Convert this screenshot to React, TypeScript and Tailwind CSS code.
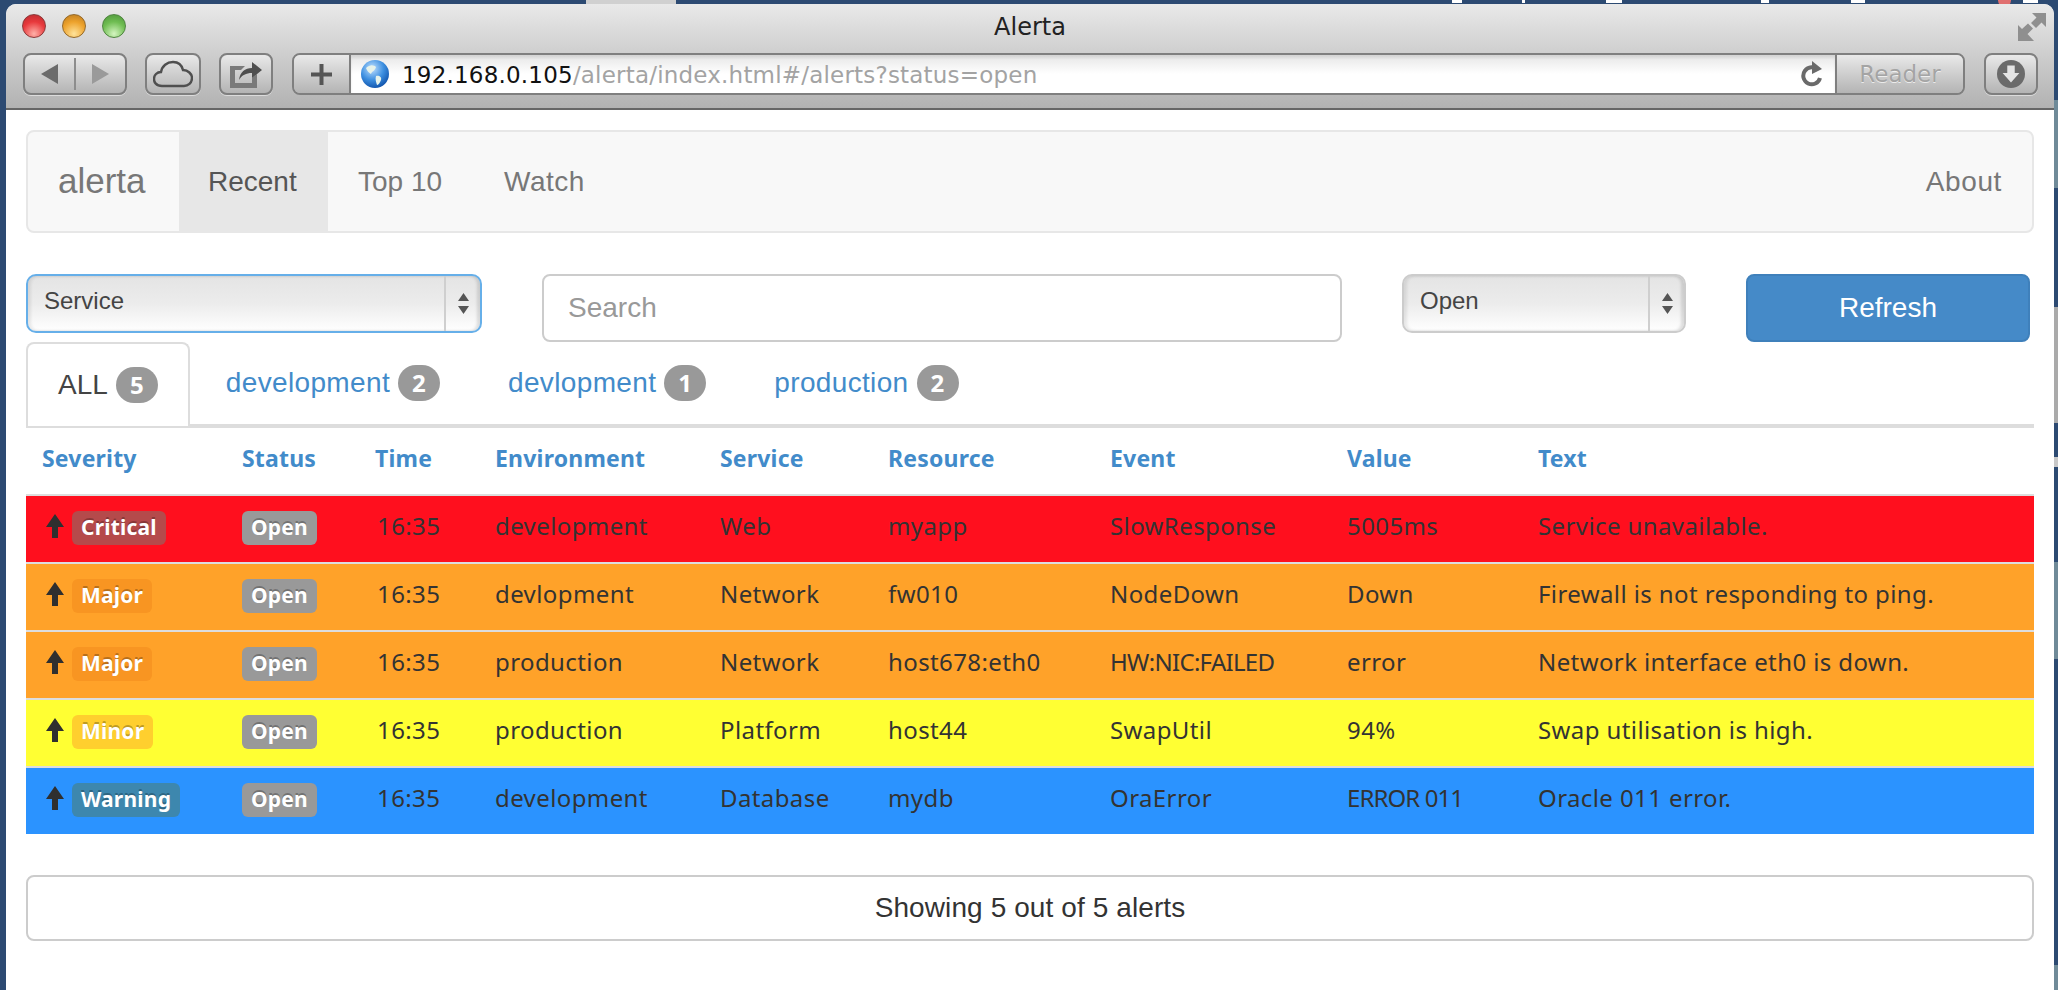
const rows = [
  { sev: "Critical", rowBg: "bg-[#ff0f1e]", pill: "bg-[#b54a4b]", env: "development", service: "Web", resource: "myapp", event: "SlowResponse", value: "5005ms", text: "Service unavailable." },
  { sev: "Major", rowBg: "bg-[#ffa229]", pill: "bg-[#f89522]", env: "devlopment", service: "Network", resource: "fw010", event: "NodeDown", value: "Down", text: "Firewall is not responding to ping." },
  { sev: "Major", rowBg: "bg-[#ffa229]", pill: "bg-[#f89522]", env: "production", service: "Network", resource: "host678:eth0", event: "HW:NIC:FAILED", eventClass: "tracking-[-0.7px]", value: "error", text: "Network interface eth0 is down." },
  { sev: "Minor", rowBg: "bg-[#ffff33]", pill: "bg-[#ffcf2e]", env: "production", service: "Platform", resource: "host44", event: "SwapUtil", value: "94%", text: "Swap utilisation is high." },
  { sev: "Warning", rowBg: "bg-[#2b93ff]", pill: "bg-[#3d87ae]", env: "development", service: "Database", resource: "mydb", event: "OraError", value: "ERROR 011", valueClass: "tracking-[-0.9px]", text: "Oracle 011 error." },
];

const headers = [
  { label: "Severity", width: "w-[200px]" },
  { label: "Status", width: "w-[133px]" },
  { label: "Time", width: "w-[120px]" },
  { label: "Environment", width: "w-[225px]" },
  { label: "Service", width: "w-[168px]" },
  { label: "Resource", width: "w-[222px]" },
  { label: "Event", width: "w-[237px]" },
  { label: "Value", width: "w-[191px]" },
  { label: "Text", width: "w-[512px]" },
];

const tabs = [
  { label: "development", count: 2 },
  { label: "devlopment", count: 1 },
  { label: "production", count: 2 },
];

function ArrowUp() {
  return (
    <svg width="18" height="24" viewBox="0 0 18 24" className="mb-[5px] shrink-0">
      <path d="M9 0 L18 13 L12 13 L12 24 L6 24 L6 13 L0 13 Z" fill="#2f2f2f" />
    </svg>
  );
}

function Pill({ bg, children }: { bg: string; children: React.ReactNode }) {
  return (
    <span className={`inline-flex h-[34px] items-center rounded-[6px] px-[9px] text-[21px] font-bold tracking-[0.2px] text-white [text-shadow:0_-2px_0_rgba(0,0,0,0.25)] ${bg}`}>
      {children}
    </span>
  );
}

function Stepper() {
  return (
    <svg width="11" height="21" viewBox="0 0 11 21">
      <path d="M5.5 0 L11 8 L0 8 Z M0 13 L11 13 L5.5 21 Z" fill="#555" />
    </svg>
  );
}

function SelectBox({ label, width, border }: { label: string; width: string; border: string }) {
  return (
    <div className={`flex h-[59px] items-center overflow-hidden rounded-[10px] border-2 bg-linear-to-b from-[#e4e4e4] via-[#ececec] to-white font-['Liberation_Sans',sans-serif] text-[24px] text-[#444] shadow-[inset_3px_0_3px_rgba(0,0,0,0.08),inset_-3px_0_3px_rgba(0,0,0,0.12)] ${width} ${border}`}>
      <span className="flex-1 pb-[5px] pl-[16px]">{label}</span>
      <span className="flex h-full w-[36px] items-center justify-center border-l-2 border-[#cfcfcf]">
        <Stepper />
      </span>
    </div>
  );
}

function ChromeBtn({ className, children }: { className: string; children: React.ReactNode }) {
  return (
    <div className={`flex h-[42px] items-center justify-center rounded-[8px] border-2 border-[#7f7f7f] bg-linear-to-b from-[#e9e9e9] to-[#b4b4b4] shadow-[0_1px_0_rgba(255,255,255,0.5)] ${className}`}>
      {children}
    </div>
  );
}

export default function App() {
  return (
    <div className="relative h-[990px] w-[2058px] overflow-hidden bg-[#2c4a72] pt-[4px] pl-[6px] pr-[4px]">
      {/* desktop bits peeking above the window */}
      <div className="absolute top-0 left-[586px] h-[5px] w-[90px] bg-[#d0d0d0]" />
      <div className="absolute top-0 left-[1452px] h-[3px] w-[10px] bg-white" />
      <div className="absolute top-0 left-[1522px] h-[3px] w-[3px] bg-white" />
      <div className="absolute top-0 left-[1606px] h-[3px] w-[16px] bg-white" />
      <div className="absolute top-0 left-[1761px] h-[3px] w-[8px] bg-white" />
      <div className="absolute top-0 left-[1851px] h-[3px] w-[14px] bg-white" />
      <div className="absolute top-[-6px] left-[1998px] h-[13px] w-[13px] rounded-full bg-[#e07070]" />
      <div className="absolute top-0 left-[2023px] h-[3px] w-[15px] bg-white" />

      {/* desktop bits to the right of the window */}
      <div className="absolute top-[100px] right-0 h-[88px] w-[4px] bg-[#6f8a98]" />
      <div className="absolute top-[307px] right-0 h-[116px] w-[4px] bg-[#aaaaaa]" />
      <div className="absolute top-[457px] right-0 h-[10px] w-[4px] bg-[#c8c8c8]" />
      <div className="absolute top-[562px] right-0 h-[97px] w-[4px] bg-[#6f8a98]" />
      <div className="absolute top-[965px] right-0 h-[25px] w-[4px] bg-[#6f8a98]" />

      <div className="relative flex h-full flex-col overflow-hidden rounded-t-[10px] bg-white">
        {/* Safari toolbar */}
        <div className="h-[106px] shrink-0 border-b-2 border-[#666] bg-linear-to-b from-[#e9e9e9] to-[#b2b2b2]">
          <div className="grid h-[49px] grid-cols-[1fr_auto_1fr] items-start">
            <div className="flex gap-[16px] pt-[10px] pl-[16px]">
              <span className="h-[24px] w-[24px] rounded-full border border-[#8a3a3a] bg-[radial-gradient(circle_at_50%_85%,#ffb0a8,#e8393c_55%,#b82a2e)]" />
              <span className="h-[24px] w-[24px] rounded-full border border-[#94692a] bg-[radial-gradient(circle_at_50%_85%,#ffe39a,#eda22c_55%,#b9791f)]" />
              <span className="h-[24px] w-[24px] rounded-full border border-[#4f8440] bg-[radial-gradient(circle_at_50%_85%,#d4f5c0,#6fbd52_55%,#4c933a)]" />
            </div>
            <div className="pt-[9px] font-['DejaVu_Sans',sans-serif] text-[24px] leading-[28px] text-[#222]">Alerta</div>
            <div className="flex justify-end pt-[9px] pr-[8px]">
              <svg width="28" height="28" viewBox="0 0 28 28">
                <path d="M28 0 V14 L23.5 9.5 L18 15 L13 10 L18.5 4.5 L14 0 Z M0 28 V12 L4 16 L10 10.5 L15 15.5 L9.5 21 L16 28 Z" fill="#8f8f8f" />
              </svg>
            </div>
          </div>

          <div className="flex items-center pl-[17px]">
            <ChromeBtn className="w-[104px]">
              <div className="flex h-full w-full items-center">
                <span className="flex flex-1 justify-center">
                  <svg width="17" height="20" viewBox="0 0 17 20"><path d="M17 0 L17 20 L0 10 Z" fill="#6b6b6b" /></svg>
                </span>
                <span className="h-[32px] w-[2px] bg-[#8d8d8d]" />
                <span className="flex flex-1 justify-center">
                  <svg width="17" height="20" viewBox="0 0 17 20"><path d="M0 0 L0 20 L17 10 Z" fill="#9a9a9a" /></svg>
                </span>
              </div>
            </ChromeBtn>
            <ChromeBtn className="ml-[18px] w-[56px]">
              <svg width="40" height="28" viewBox="0 0 40 28">
                <path d="M9 26 C3 26 1 22 1 19 C1 15 4 12 8 12 C9 6 14 2 20 2 C26 2 29 6 30 10 C35 10 39 14 39 18 C39 23 35 26 31 26 Z" fill="none" stroke="#4f4f4f" strokeWidth="2.4" />
              </svg>
            </ChromeBtn>
            <ChromeBtn className="ml-[18px] w-[54px]">
              <svg width="32" height="30" viewBox="0 0 32 30">
                <path d="M0 7 H15 L11 11 H5 V24 H22 V19 L27 15 V29 H0 Z" fill="#7a7a7a" />
                <path d="M9 21 C10 13 15 9 22 9 V3 L32 11 L22 19 V14 C16 14 12 16 9 21 Z" fill="#4f4f4f" />
              </svg>
            </ChromeBtn>

            {/* address bar */}
            <div className="ml-[19px] flex h-[42px] w-[1673px] overflow-hidden rounded-[8px] border-2 border-[#7f7f7f]">
              <div className="flex w-[57px] items-center justify-center border-r-2 border-[#7f7f7f] bg-linear-to-b from-[#e9e9e9] to-[#b4b4b4]">
                <svg width="21" height="21" viewBox="0 0 21 21"><path d="M8.5 0 H12.5 V8.5 H21 V12.5 H12.5 V21 H8.5 V12.5 H0 V8.5 H8.5 Z" fill="#555" /></svg>
              </div>
              <div className="flex flex-1 items-center bg-linear-to-b from-[#e6e6e6] via-white to-white pl-[10px] font-['DejaVu_Sans',sans-serif] text-[23px] tracking-[0.2px] shadow-[inset_0_3px_3px_rgba(0,0,0,0.08)]">
                <svg width="28" height="30" viewBox="0 0 28 30" className="shrink-0">
                  <defs>
                    <radialGradient id="globe" cx="40%" cy="30%" r="75%">
                      <stop offset="0%" stopColor="#bfe0ff" />
                      <stop offset="55%" stopColor="#3d8fe0" />
                      <stop offset="100%" stopColor="#0d4fa8" />
                    </radialGradient>
                  </defs>
                  <circle cx="14" cy="15" r="14" fill="url(#globe)" />
                  <path d="M5 9 C9 5 13 6 15 8 C14 12 11 12 10 15 C8 14 6 12 5 9 Z M15 17 C18 16 21 18 20 21 C19 24 17 26 16 26 C15 23 14 20 15 17 Z" fill="#e6f2ea" />
                </svg>
                <span className="ml-[13px] pt-[2px] text-[#111]">192.168.0.105</span>
                <span className="pt-[2px] text-[#a3a3a3]">/alerta/index.html#/alerts?status=open</span>
                <span className="ml-auto mr-[12px] flex">
                  <svg width="22" height="26" viewBox="0 0 22 26">
                    <path d="M17 9 A8.5 8.5 0 1 0 19 17" fill="none" stroke="#6a6a6a" strokeWidth="4" />
                    <path d="M11 0 L21 8 L11 13 Z" fill="#6a6a6a" />
                  </svg>
                </span>
              </div>
              <div className="flex w-[128px] items-center justify-center border-l-2 border-[#7f7f7f] bg-linear-to-b from-[#e9e9e9] to-[#b4b4b4] font-['DejaVu_Sans',sans-serif] text-[23px] text-[#a4a4a4] [text-shadow:0_1px_0_rgba(255,255,255,0.7)]">
                Reader
              </div>
            </div>

            <ChromeBtn className="ml-[19px] w-[54px]">
              <svg width="28" height="28" viewBox="0 0 30 30">
                <circle cx="15" cy="15" r="15" fill="#6b6b6b" />
                <path d="M11 6 H19 V14 H24 L15 24 L6 14 H11 Z" fill="#e4e4e4" />
              </svg>
            </ChromeBtn>
          </div>
        </div>

        {/* page */}
        <div className="flex-1 bg-white px-[20px] pt-[20px] font-['Liberation_Sans',sans-serif] text-[28px] text-[#333]">
          <nav className="flex h-[103px] items-stretch rounded-[8px] border-2 border-[#e7e7e7] bg-[#f8f8f8] text-[#777]">
            <div className="flex w-[151px] items-center pl-[30px] text-[35px]">alerta</div>
            <div className="flex w-[149px] items-center bg-[#e7e7e7] pl-[29px] text-[#555]">Recent</div>
            <div className="flex items-center pl-[30px] pr-[32px]">Top 10</div>
            <div className="flex items-center px-[30px] tracking-[0.5px]">Watch</div>
            <div className="ml-auto flex items-center pr-[30px] tracking-[0.6px]">About</div>
          </nav>

          <div className="mt-[41px] flex h-[68px] items-start gap-[60px]">
            <SelectBox label="Service" width="w-[456px]" border="border-[#66afe9]" />
            <div className="flex h-[68px] w-[800px] items-center rounded-[8px] border-2 border-[#ccc] bg-white pl-[24px] text-[#999]">Search</div>
            <SelectBox label="Open" width="w-[284px]" border="border-[#ccc]" />
            <button className="h-[68px] w-[284px] rounded-[8px] border-2 border-[#3f80bb] bg-[#458ac8] text-white">Refresh</button>
          </div>

          <div className="flex h-[86px] items-stretch gap-[4px] border-b-4 border-[#ddd]">
            <div className="-mb-[2px] flex items-center gap-[8px] rounded-t-[8px] border-2 border-b-0 border-[#ddd] bg-white px-[30px] text-[#444]">
              ALL
              <span className="flex h-[36px] w-[42px] items-center justify-center rounded-full bg-[#999] font-['Noto_Sans',sans-serif] text-[24px] font-bold text-white">5</span>
            </div>
            {tabs.map((t) => (
              <div key={t.label} className="flex items-center gap-[8px] px-[32px] tracking-[0.35px] text-[#428bca]">
                {t.label}
                <span className="flex h-[36px] w-[42px] items-center justify-center rounded-full bg-[#999] font-['Noto_Sans',sans-serif] text-[24px] font-bold text-white">{t.count}</span>
              </div>
            ))}
          </div>

          <table className="w-[2008px] table-fixed border-separate border-spacing-0 font-['Noto_Sans',sans-serif] text-[24px] tracking-[0.4px] text-[#333]">
            <thead>
              <tr className="h-[66px]">
                {headers.map((h) => (
                  <th key={h.label} className={`pb-[5px] pl-[16px] text-left text-[23px] font-bold tracking-[0.2px] text-[#428bca] ${h.width}`}>
                    {h.label}
                  </th>
                ))}
              </tr>
            </thead>
            <tbody>
              {rows.map((r, i) => (
                <tr key={i} className={`h-[68px] ${r.rowBg}`}>
                  <td className="border-t-2 border-[#ddd] pb-[2px] pl-[20px]">
                    <div className="flex items-center gap-[8px]">
                      <ArrowUp />
                      <Pill bg={r.pill}>{r.sev}</Pill>
                    </div>
                  </td>
                  <td className="border-t-2 border-[#ddd] pb-[2px] pl-[16px]">
                    <div className="flex items-center">
                      <Pill bg="bg-[#999]">Open</Pill>
                    </div>
                  </td>
                  <td className="border-t-2 border-[#ddd] pb-[7px] pl-[18px]">16:35</td>
                  <td className="border-t-2 border-[#ddd] pb-[7px] pl-[16px]">{r.env}</td>
                  <td className="border-t-2 border-[#ddd] pb-[7px] pl-[16px]">{r.service}</td>
                  <td className="border-t-2 border-[#ddd] pb-[7px] pl-[16px]">{r.resource}</td>
                  <td className="border-t-2 border-[#ddd] pb-[7px] pl-[16px]">
                    <span className={r.eventClass}>{r.event}</span>
                  </td>
                  <td className="border-t-2 border-[#ddd] pb-[7px] pl-[16px]">
                    <span className={r.valueClass}>{r.value}</span>
                  </td>
                  <td className="border-t-2 border-[#ddd] pb-[7px] pl-[16px]">{r.text}</td>
                </tr>
              ))}
            </tbody>
          </table>

          <div className="mt-[41px] flex h-[66px] items-center justify-center rounded-[8px] border-2 border-[#ccc] bg-white tracking-[0.1px]">
            Showing 5 out of 5 alerts
          </div>
        </div>
      </div>
    </div>
  );
}
